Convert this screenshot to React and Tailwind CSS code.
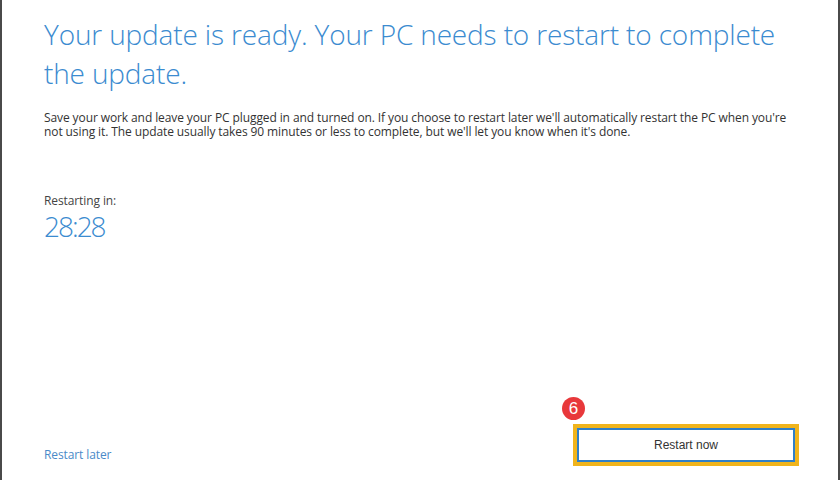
import React from 'react';

export default function App() {
    return (
        <div className="flex h-[480px] w-[840px] flex-col border-x-2 border-[#4a4a4a] bg-white pl-[42px] pr-[39px] font-['Open_Sans',sans-serif]">
            <h1 className="mt-[15px] text-[28px] font-light leading-[39px] tracking-[-0.15px] text-[#3b8bd0]">
                Your update is ready. Your PC needs to restart to complete the update.
            </h1>
            <p className="mt-[18px] text-[12px] leading-[14px] tracking-[-0.1px] text-[#333]">
                Save your work and leave your PC plugged in and turned on. If you choose to restart later we'll automatically restart the PC when you're not using it. The update usually takes 90 minutes or less to complete, but we'll let you know when it's done.
            </p>
            <p className="mt-[55px] text-[12px] leading-[14px] tracking-[-0.1px] text-[#444]">Restarting in:</p>
            <p className="text-[28px] font-light leading-[36px] tracking-[-2px] text-[#3b8bd0]">28:28</p>
            <div className="mt-auto mb-[14px] flex items-end justify-between">
                <a className="mb-[2px] text-[12px] tracking-[-0.1px] text-[#4a8ac8]" href="#">Restart later</a>
                <div className="relative">
                    <span className="absolute -left-[11px] -top-[27px] flex h-[23px] w-[23px] items-center justify-center rounded-full bg-[#e8383b] font-['Liberation_Sans',sans-serif] text-[17px] text-white">6</span>
                    <div className="border-4 border-[#f0b41c]">
                        <button className="flex h-[34px] w-[218px] items-center justify-center border-2 border-[#2f7fc8] bg-white font-['Liberation_Sans',sans-serif] text-[12px] text-[#333]">
                            Restart now
                        </button>
                    </div>
                </div>
            </div>
        </div>
    );
}
